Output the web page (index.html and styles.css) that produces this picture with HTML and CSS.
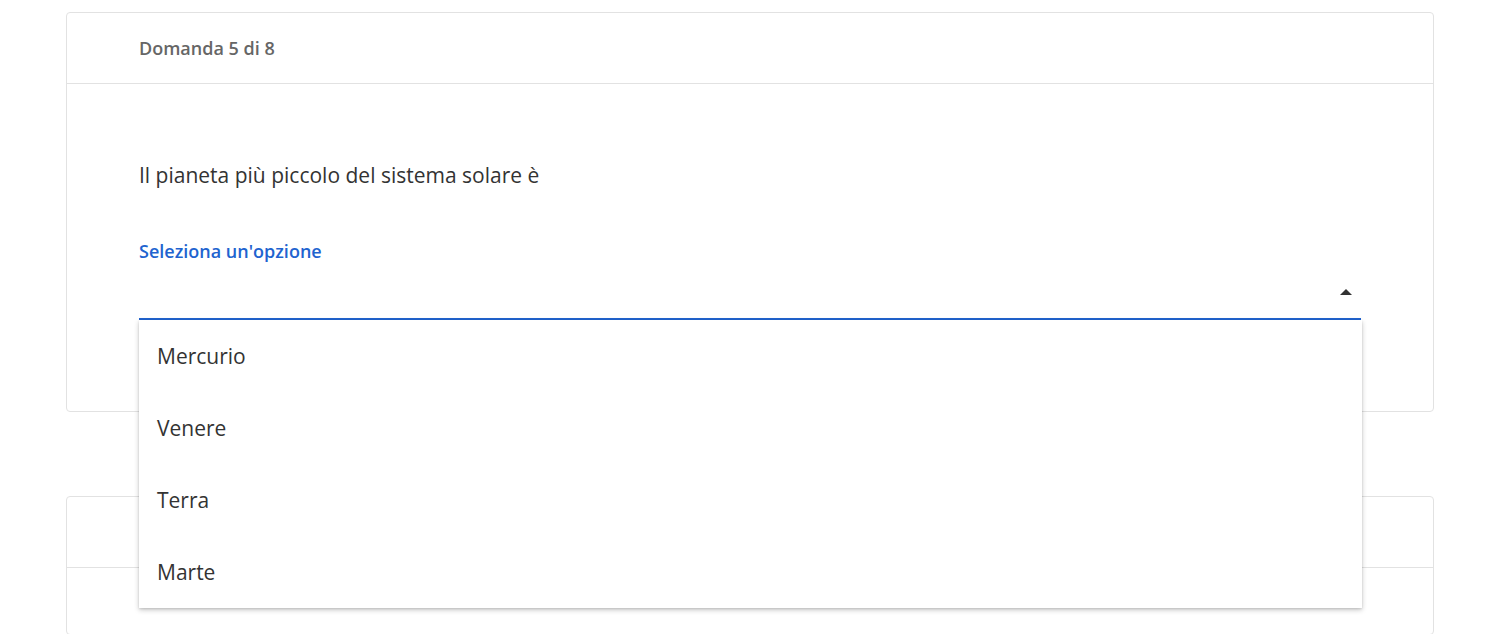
FILE: index.html
```html
<!DOCTYPE html>
<html lang="it">
<head>
<meta charset="utf-8">
<title>Quiz</title>
<link rel="stylesheet" href="styles.css">
</head>
<body>
<main class="page">
  <section class="card">
    <header class="card-head">Domanda 5 di 8</header>
    <div class="card-body">
      <p class="question">Il pianeta più piccolo del sistema solare è</p>
      <div class="field">
        <label class="field-label">Seleziona un'opzione</label>
        <div class="select">
          <span class="arrow"></span>
        </div>
        <ul class="menu">
          <li class="option">Mercurio</li>
          <li class="option">Venere</li>
          <li class="option">Terra</li>
          <li class="option">Marte</li>
        </ul>
      </div>
    </div>
  </section>
  <section class="card card-next">
    <header class="card-head"></header>
    <div class="card-body card-body-next"></div>
  </section>
</main>
</body>
</html>
```
FILE: styles.css
```css
* { box-sizing: border-box; }
html, body { margin: 0; padding: 0; background: #fff; }
body {
  font-family: "Open Sans", "Noto Sans", sans-serif;
  color: #333;
  overflow: hidden;
  height: 634px;
}
.page {
  padding: 12px 66px 0;
  display: flex;
  flex-direction: column;
  gap: 84px;
}
.card {
  border: 1px solid #e2e2e2;
  border-radius: 4px;
  background: #fff;
}
.card-head {
  height: 71px;
  border-bottom: 1px solid #e2e2e2;
  padding: 0 72px;
  display: flex;
  align-items: center;
  font-size: 18px;
  font-weight: 600;
  color: #666;
}
.card-body {
  padding: 77px 72px 90px;
  min-height: 327px;
}
.card-body-next {
  min-height: 0;
  height: 66px;
  padding: 0;
}
.question {
  margin: 0;
  font-size: 21px;
  line-height: 28px;
  color: #333;
}
.field {
  position: relative;
  margin-top: 50px;
}
.field-label {
  display: block;
  font-size: 18px;
  font-weight: 600;
  line-height: 24px;
  color: #2163cf;
}
.select {
  height: 57px;
  border-bottom: 2px solid #2163cf;
  display: flex;
  justify-content: flex-end;
  align-items: center;
  padding-right: 9px;
  padding-top: 2px;
}
.arrow {
  width: 0;
  height: 0;
  border-left: 6px solid transparent;
  border-right: 6px solid transparent;
  border-bottom: 6px solid #333;
}
.menu {
  position: absolute;
  left: 0;
  right: -1px;
  top: 81px;
  margin: 0;
  padding: 0;
  list-style: none;
  background: #fff;
  box-shadow: 0 2px 5px rgba(0,0,0,0.22), 0 1px 2px rgba(0,0,0,0.1);
  z-index: 5;
}
.option {
  height: 72px;
  display: flex;
  align-items: center;
  padding-left: 18px;
  font-size: 21px;
  color: #333;
}
```
